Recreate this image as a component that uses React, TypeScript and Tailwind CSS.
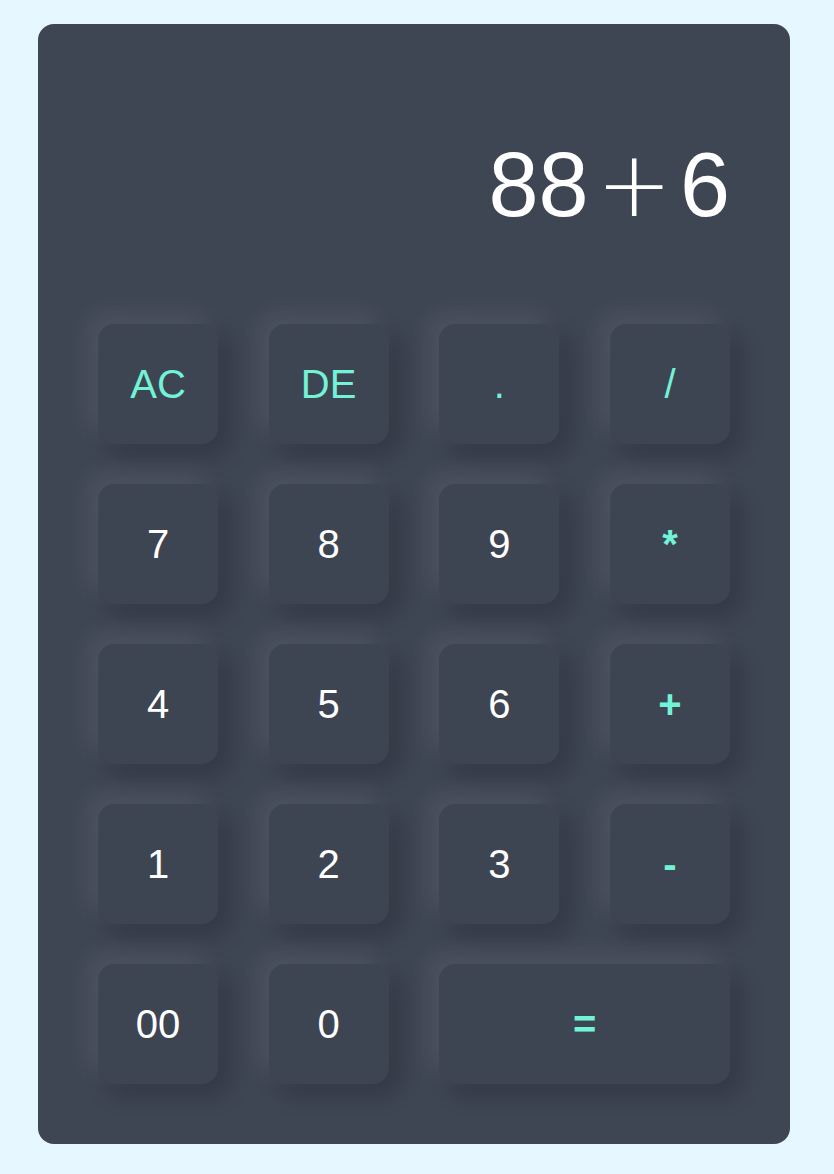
const keys = [
  { label: "AC", accent: true },
  { label: "DE", accent: true },
  { label: ".", accent: true },
  { label: "/", accent: true },
  { label: "7" },
  { label: "8" },
  { label: "9" },
  { label: "*", accent: true, bold: true },
  { label: "4" },
  { label: "5" },
  { label: "6" },
  { label: "+", accent: true, bold: true },
  { label: "1" },
  { label: "2" },
  { label: "3" },
  { label: "-", accent: true, bold: true },
  { label: "00" },
  { label: "0" },
  { label: "=", accent: true, bold: true, wide: true },
];

const App = () => {
  return (
    <div className="min-h-[1174px] bg-[#e6f7ff] pt-6 pl-[38px] pb-[30px] font-['Liberation_Sans',Arial,sans-serif]">
      <div className="w-[752px] rounded-2xl bg-[#3e4553] p-[60px]">
        {/* Display */}
        <div className="mt-[51px] mb-[89px] flex justify-end text-[90px] leading-[100px] text-white">
          <span>88</span>
          <span className="mx-2 font-['DejaVu_Sans',sans-serif] font-light">+</span>
          <span>6</span>
        </div>
        {/* Keypad */}
        <div className="grid grid-cols-[repeat(4,120px)] justify-between gap-y-10">
          {keys.map((key) => (
            <button
              key={key.label}
              className={`h-[120px] rounded-2xl bg-[#3d4452] text-[40px] shadow-[-10px_-10px_24px_rgba(255,255,255,0.09),10px_10px_24px_rgba(0,0,0,0.2)] flex items-center justify-center ${
                key.accent ? "text-[#72f2d6]" : "text-white"
              } ${key.bold ? "font-bold" : "font-normal"} ${key.wide ? "col-span-2" : ""}`}
            >
              {key.label}
            </button>
          ))}
        </div>
      </div>
    </div>
  );
};

export default App;
